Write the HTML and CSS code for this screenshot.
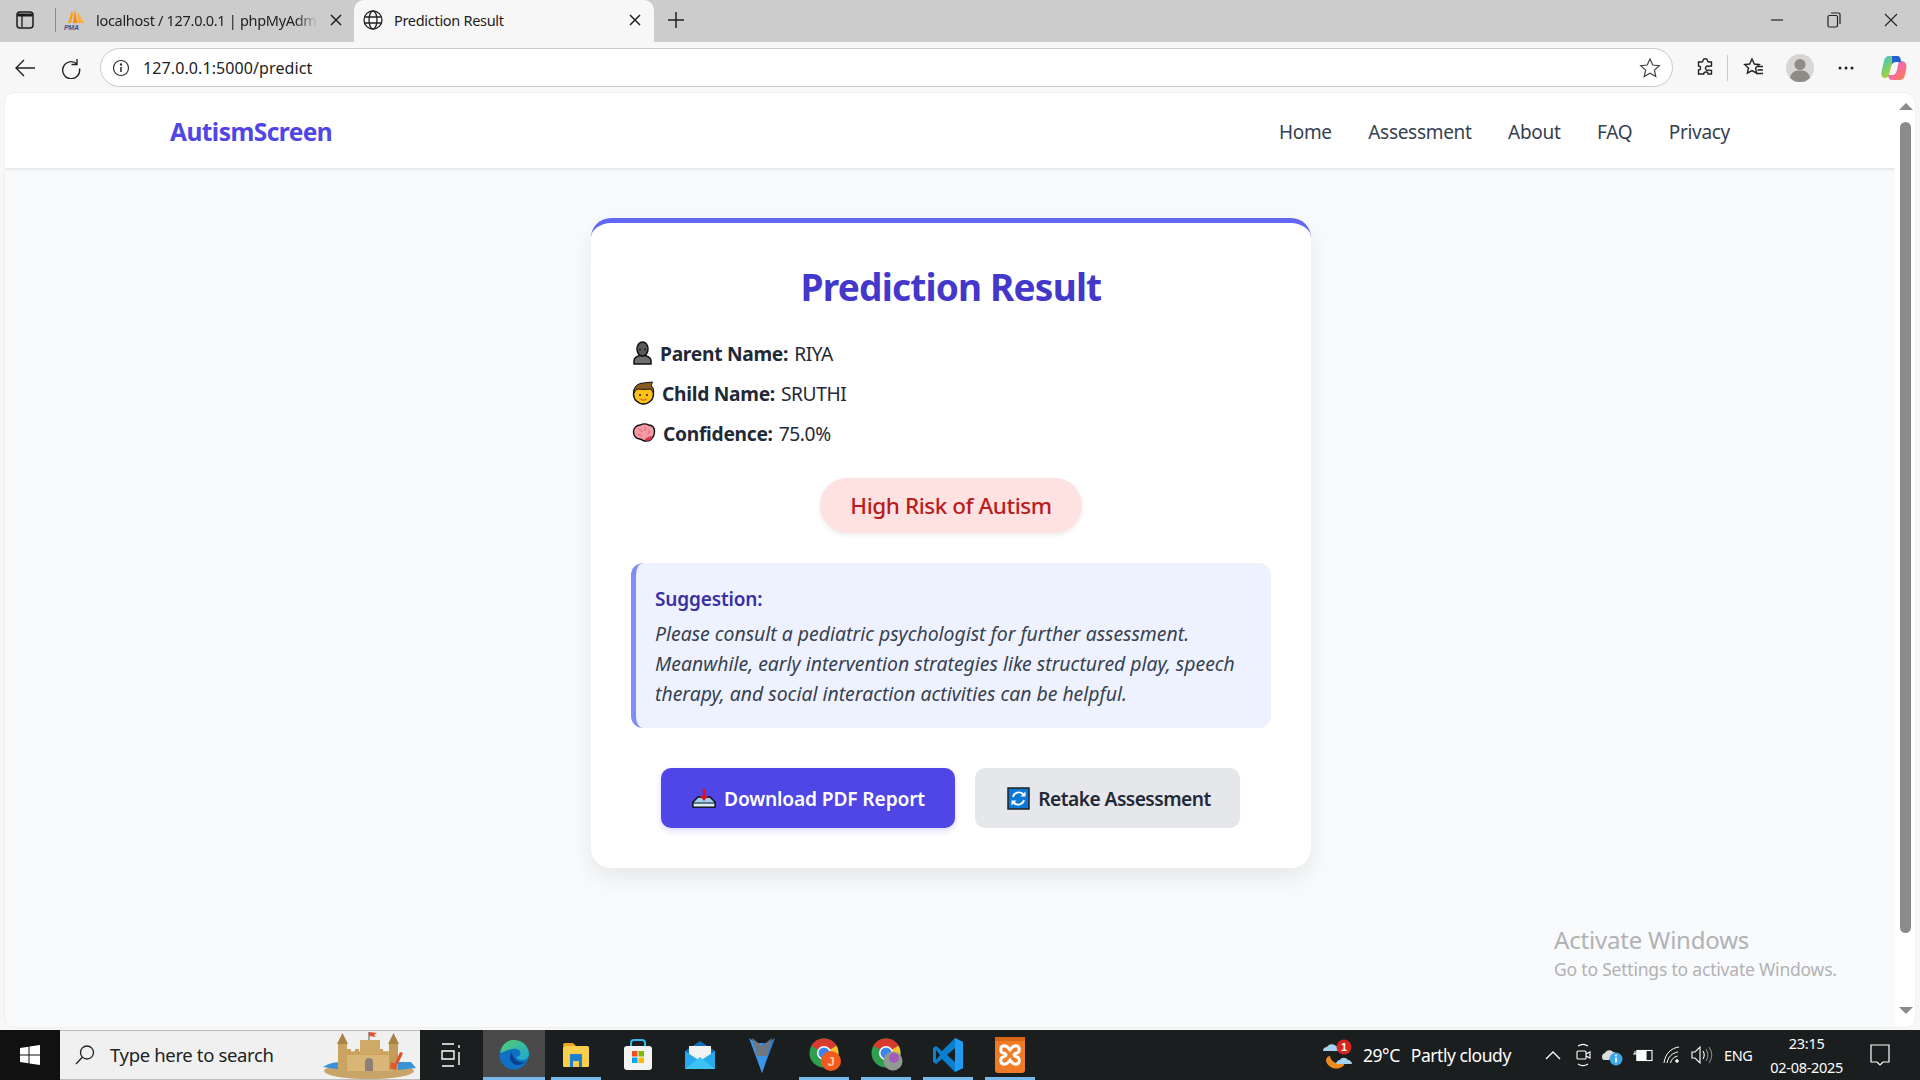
FILE: index.html
```html
<!DOCTYPE html>
<html lang="en">
<head>
<meta charset="utf-8">
<title>Prediction Result</title>
<link rel="stylesheet" href="styles.css">
</head>
<body>
<div class="screen">
  <div class="tabstrip">
    <div class="sidebtn">
      <svg width="20" height="20" viewBox="0 0 20 20"><rect x="2" y="2" width="16" height="16" rx="3" fill="none" stroke="#1a1a1a" stroke-width="1.5"/><path d="M2.5 3.5h15v3h-15z" fill="#1a1a1a"/><path d="M7 6v11" stroke="#1a1a1a" stroke-width="1.3"/></svg>
    </div>
    <div class="tabsep"></div>
    <div class="tab inactive">
      <svg class="favicon" width="22" height="22" viewBox="0 0 22 22"><path d="M8 1 L4 14 H7 L9 6z" fill="#f7a11a"/><path d="M11 0 L9 14 H13z" fill="#f58a0b"/><path d="M14 3 L13 14 H20z" fill="#fbb040"/><text x="0" y="21" class="pma">PMA</text></svg>
      <span class="tabtitle fade">localhost / 127.0.0.1 | phpMyAdmin</span>
      <svg class="tabx" width="12" height="12" viewBox="0 0 12 12"><path d="M1 1l10 10M11 1L1 11" stroke="#222" stroke-width="1.5"/></svg>
    </div>
    <div class="tab active">
      <svg class="favicon" width="20" height="20" viewBox="0 0 20 20" fill="none" stroke="#222" stroke-width="1.3"><circle cx="10" cy="10" r="9"/><ellipse cx="10" cy="10" rx="4" ry="9"/><path d="M1.5 7h17M1.5 13h17"/></svg>
      <span class="tabtitle">Prediction Result</span>
      <svg class="tabx" width="12" height="12" viewBox="0 0 12 12"><path d="M1 1l10 10M11 1L1 11" stroke="#222" stroke-width="1.5"/></svg>
    </div>
    <div class="newtab">
      <svg width="18" height="18" viewBox="0 0 18 18"><path d="M9 1v16M1 9h16" stroke="#222" stroke-width="1.5"/></svg>
    </div>
    <div class="winbtns">
      <svg width="14" height="14" viewBox="0 0 14 14"><path d="M1 7h12" stroke="#222" stroke-width="1.2"/></svg>
      <svg width="14" height="16" viewBox="0 0 14 16" fill="none" stroke="#222" stroke-width="1.2"><rect x="1" y="3.5" width="9.5" height="11.5" rx="1.5"/><path d="M4 1h7.5a1.5 1.5 0 0 1 1.5 1.5V12"/></svg>
      <svg width="14" height="14" viewBox="0 0 14 14"><path d="M1 1l12 12M13 1L1 13" stroke="#222" stroke-width="1.1"/></svg>
    </div>
  </div>

  <div class="toolbar">
    <svg class="navicon" width="22" height="20" viewBox="0 0 22 20" fill="none" stroke="#222" stroke-width="1.4"><path d="M21 10H2M10 2l-8 8 8 8"/></svg>
    <svg class="navicon refresh" width="22" height="22" viewBox="0 0 22 22" fill="none" stroke="#222" stroke-width="1.4"><path d="M17 2v5.500h-5.500M17 7A8.500 8.500 0 1 0 19.500 11.500"/></svg>
    <div class="addressbar">
      <svg width="18" height="18" viewBox="0 0 18 18" fill="none" stroke="#333" stroke-width="1.2"><circle cx="9" cy="9" r="7.500"/><path d="M9 8v5" stroke-width="1.600"/><circle cx="9" cy="5.500" r="0.600" fill="#333"/></svg>
      <span class="url">127.0.0.1:5000/predict</span>
      <svg class="addr-star" width="22" height="22" viewBox="0 0 22 22" fill="none" stroke="#444" stroke-width="1.2"><path d="M11 2l2.800 6 6.500.7-4.900 4.400 1.400 6.500L11 16.300 5.200 19.600l1.400-6.500L1.700 8.700 8.200 8z"/></svg>
    </div>
    <div class="toolicons">
      <svg class="ti-ext" width="20" height="22" viewBox="0 0 20 22" fill="none" stroke="#222" stroke-width="1.400"><path d="M8 3.500a2.300 2.300 0 0 1 4.500 0c0 1 .3 1.500 1.300 1.500h2.700v4c-1 0-2-.3-2.500.5a2.200 2.200 0 1 0 0 3.500c.8.500 1.500.5 2.500.5v3.500h-3.500c0-1.200-.5-2-2-2s-2.300.8-2.300 2H3.500v-4c1.300 0 2-.6 2-2s-.7-2-2-2V5h3c1 0 1.500-.5 1.500-1.500z"/></svg>
      <div class="toolsep"></div>
      <svg class="ti-fav" width="22" height="22" viewBox="0 0 22 22" fill="none" stroke="#222" stroke-width="1.400"><path d="M9 2l2.300 5 5 .6-3.700 3.500 1 5L9 13.600 4.400 16.100l1-5L1.700 7.600l5-.6z"/><path d="M15 9.500h5M14.500 13h5.500M13 16.500h7"/></svg>
      <svg class="avatar" width="28" height="28" viewBox="0 0 28 28"><circle cx="14" cy="14" r="14" fill="#d8d6d3"/><circle cx="14" cy="10.500" r="5.500" fill="#8f8b86"/><path d="M4 24c1-6 5-7.500 10-7.500s9 1.500 10 7.500a14 14 0 0 1-20 0z" fill="#8f8b86"/></svg>
      <svg class="ti-more" width="18" height="6" viewBox="0 0 18 6" fill="#222"><circle cx="3" cy="3" r="1.500"/><circle cx="9" cy="3" r="1.500"/><circle cx="15" cy="3" r="1.500"/></svg>
      <svg width="28" height="28" viewBox="0 0 28 28">
        <defs>
          <linearGradient id="cpA" x1="0" y1="0" x2="1" y2="1"><stop offset="0" stop-color="#35c1f1"/><stop offset=".5" stop-color="#8bd34a"/><stop offset="1" stop-color="#f9c623"/></linearGradient>
          <linearGradient id="cpB" x1="0" y1="0" x2="1" y2="1"><stop offset="0" stop-color="#b05ae8"/><stop offset=".5" stop-color="#f56ea0"/><stop offset="1" stop-color="#fb7a3c"/></linearGradient>
        </defs>
        <path d="M9 2h8c2 0 3 1 3.500 3L21 8h-5c-3 0-4 1.500-5 5l-2 8c-.5 2-2 3-4 3-3 0-4-3-3.500-6L4 7c.5-3 2.500-5 5-5z" fill="url(#cpA)"/>
        <path d="M19 26h-7c-2 0-3-1-3.500-3l-.5-2h4c3 0 4-2 5-5l1.500-7c.3-1.500 1.500-2 3-2 3.500 0 5 3 5 6l-1.500 8c-.5 3-3 5-6 5z" fill="url(#cpB)"/>
        <path d="M12 2h5c2 0 3 1 3.500 3L21 8h-5c-2.200 0-3.400.8-4.200 2.500C12.500 7 12 4 12 2z" fill="#1f5fd6"/>
      </svg>
    </div>
  </div>

  <div class="viewport">
    <div class="page">
      <nav class="navbar">
        <a class="logo">AutismScreen</a>
        <div class="navlinks">
          <a>Home</a><a>Assessment</a><a>About</a><a>FAQ</a><a>Privacy</a>
        </div>
      </nav>
      <main class="main">
        <section class="card">
          <h1 class="title">Prediction Result</h1>
          <p class="info">
            <svg class="emoji" width="23" height="24" viewBox="0 0 23 24"><path d="M3 23v-3c0-3 2.500-4.500 5.500-5.500h6c3 1 5.500 2.500 5.500 5.500v3z" fill="#707070" stroke="#111" stroke-width="1.500"/><ellipse cx="11.500" cy="8" rx="5.500" ry="7" fill="#5a5a5a" stroke="#111" stroke-width="1.500"/><circle cx="9" cy="8.500" r=".9" fill="#111"/><circle cx="14" cy="8.500" r=".9" fill="#111"/></svg>
            <strong>Parent Name:</strong> <span>RIYA</span>
          </p>
          <p class="info">
            <svg class="emoji" width="25" height="24" viewBox="0 0 25 24"><circle cx="12.500" cy="13" r="10" fill="#fcc21b" stroke="#111" stroke-width="1.400"/><path d="M3 12C2 6 7 2 12.500 2c3 0 6-1 9-1-1 2-1 3-1 4 2 2 2.500 4 2 7-1-2-2-3-3.500-4-3.500.5-8.500.5-11.500 0C5 8.500 4 10 3 12z" fill="#8a5a24" stroke="#111" stroke-width="1"/><circle cx="9" cy="14" r="1" fill="#222"/><circle cx="16" cy="14" r="1" fill="#222"/><path d="M9.500 18c2 1.500 4 1.500 6 0" stroke="#d96a1a" stroke-width="1.200" fill="none"/></svg>
            <strong>Child Name:</strong> <span>SRUTHI</span>
          </p>
          <p class="info">
            <svg class="emoji" width="26" height="20" viewBox="0 0 26 20"><path d="M2.500 9c0-4 3-7 7-7 2-1.500 6-1.500 8 0 4 0 6 3 6 7s-1 5-3 7c-1 1.500-3 2-5 2-2 0-4 0-5-1.500-4-.500-8-2.500-8-7.500z" fill="#f49aa8" stroke="#111" stroke-width="1.400"/><path d="M15.500 18c2 0 5-1 6-3l-2-2-6 3z" fill="#d8334a"/><path d="M7.500 6c2 0 3 1 3 3M13.500 4c1 1 1 3 0 4M17.500 7c1 1 1 3-1 4M6.500 12c2-1 4 0 4 2" stroke="#d66" fill="none"/></svg>
            <strong>Confidence:</strong> <span>75.0%</span>
          </p>
          <div class="pillrow"><span class="pill">High Risk of Autism</span></div>
          <div class="suggestion">
            <h2 class="sugg-title">Suggestion:</h2>
            <p class="sugg-text">Please consult a pediatric psychologist for further assessment. Meanwhile, early intervention strategies like structured play, speech therapy, and social interaction activities can be helpful.</p>
          </div>
          <div class="actions">
            <a class="btn primary">
              <svg class="btnicon" width="24" height="20" viewBox="0 0 24 20"><path d="M1 19v-5l5-5h12l5 5v5z" fill="#9fd0ef" stroke="#111" stroke-width="1.500" stroke-linejoin="round"/><path d="M1 15h22v4H1z" fill="#d7ecf9" stroke="#111" stroke-width="1.200"/><path d="M12 1v10" stroke="#e0101c" stroke-width="2.400"/><path d="M8 8h8l-4 5z" fill="#e0101c"/></svg>
              Download PDF Report
            </a>
            <a class="btn secondary">
              <svg class="btnicon" width="23" height="23" viewBox="0 0 23 23"><rect x="1" y="1" width="21" height="21" fill="#0a78d4" stroke="#222" stroke-width="1.500"/><path d="M6 10a6 6 0 0 1 10-3l1.500 1.500M17 13a6 6 0 0 1-10 3l-1.500-1.500" stroke="#fff" stroke-width="1.800" fill="none"/><path d="M18.500 4.500v5h-5zM4.500 18.500v-5h5z" fill="#fff"/></svg>
              Retake Assessment
            </a>
          </div>
        </section>
      </main>
      <div class="watermark">
        <div class="wm-title">Activate Windows</div>
        <div class="wm-sub">Go to Settings to activate Windows.</div>
      </div>
    </div>
    <div class="scrollbar">
      <div class="arrow up"></div>
      <div class="thumb"></div>
      <div class="arrow down"></div>
    </div>
  </div>

  <div class="taskbar">
    <div class="startbtn">
      <svg width="20" height="20" viewBox="0 0 20 20" fill="#fff"><path d="M0 3l8.500-1.200V9.500H0zM9.500 1.600L20 0v9.500H9.500zM0 10.500h8.500v7.700L0 17zM9.500 10.500H20V20L9.500 18.400z"/></svg>
    </div>
    <div class="searchbox">
      <svg width="22" height="22" viewBox="0 0 22 22" fill="none" stroke="#222" stroke-width="1.300"><circle cx="13" cy="8.500" r="6.500"/><path d="M8.500 13L2 20"/></svg>
      <span class="searchtext">Type here to search</span>
      <svg class="castle" width="94" height="50" viewBox="0 0 94 50">
        <ellipse cx="46" cy="41" rx="45" ry="8" fill="#c9a468"/>
        <path d="M0 37c6-4 12-5 20-5v8z" fill="#3a93d6"/>
        <path d="M73 32h15l5 6-18 2z" fill="#3a93d6"/>
        <rect x="24" y="21" width="46" height="20" fill="#d9b676"/>
        <path d="M24 19h4v3h4v-3h4v3h4v-3h4v3h4v-3h4v3h4v-3h4v3h5v3H24z" fill="#c9a05c"/>
        <rect x="37" y="10" width="20" height="14" fill="#cfa968"/>
        <path d="M46 10V2" stroke="#555" stroke-width="1"/>
        <path d="M46 2l8 1-3 2 2 2-7-1z" fill="#e2502a"/>
        <rect x="15" y="14" width="9" height="26" fill="#cba461"/><path d="M14 14l5.500-11L25 14z" fill="#a98449"/>
        <rect x="66" y="14" width="9" height="26" fill="#c49c58"/><path d="M65 14l5.500-11L76 14z" fill="#a98449"/>
        <path d="M42 41V32a4 4 0 0 1 8 0v9z" fill="#8a8079"/>
        <path d="M77 22l3 1-5 11-3-1z" fill="#e0502a"/>
        <path d="M68 32l6 2-1 6-6-2z" fill="#e8562d"/>
      </svg>
    </div>
    <div class="taskcell taskview">
      <svg width="20" height="24" viewBox="0 0 20 24" fill="none" stroke="#fff" stroke-width="1.400"><path d="M1 1h12M1 23h12M1 8h12v8H1zM18 2v3M18 9v13"/></svg>
    </div>
    <div class="taskcell current running">
      <svg width="30" height="32" viewBox="0 0 30 32">
        <defs><linearGradient id="edgeA" x1="0" y1="0" x2="1" y2="1"><stop offset="0" stop-color="#55d16a"/><stop offset="1" stop-color="#1aa5d8"/></linearGradient></defs>
        <circle cx="15" cy="16" r="14.500" fill="#0f71c4"/>
        <path d="M1 14C3 5 9 1 15 1c8 0 15 6 15 14 0 4-3 6-6.500 6-3 0-6-1-6-3 3-.5 4-2 4-4 0-3-4-5-8-4-5 1-8 3-12.500 4z" fill="url(#edgeA)"/>
        <path d="M13 13c-3 3-3 9 2 12 3 2 8 1 11-2-3 1-8 0-10-3-2-2-3-5-3-7z" fill="#0b3f8f"/>
      </svg>
    </div>
    <div class="taskcell running partial">
      <svg width="28" height="26" viewBox="0 0 28 26"><path d="M1 3a2 2 0 0 1 2-2h8l3 3H1z" fill="#e8a71c"/><rect x="1" y="4" width="26" height="21" rx="1.500" fill="#f8cf4a"/><path d="M8 12h12v13h-3v-6h-6v6H8z" fill="#1d7fd1"/></svg>
    </div>
    <div class="taskcell">
      <svg width="30" height="32" viewBox="0 0 30 32"><path d="M8 7V4a3 3 0 0 1 3-3h8a3 3 0 0 1 3 3v3" fill="none" stroke="#38b6ef" stroke-width="2"/><rect x="1" y="7" width="28" height="24" rx="3" fill="#f4f4f4"/><rect x="9" y="12" width="5.500" height="5.500" fill="#f25022"/><rect x="15.500" y="12" width="5.500" height="5.500" fill="#7fba00"/><rect x="9" y="18.500" width="5.500" height="5.500" fill="#00a4ef"/><rect x="15.500" y="18.500" width="5.500" height="5.500" fill="#ffb900"/></svg>
    </div>
    <div class="taskcell">
      <svg width="30" height="28" viewBox="0 0 30 28"><path d="M0 10L15 0l15 10v18H0z" fill="#0f6cbd"/><path d="M4 5h22v11L15 22 4 16z" fill="#f3f3f3"/><path d="M0 10l15 10 15-10v18H0z" fill="#27a9ec"/><path d="M0 28l15-12 15 12z" fill="#3cc2f5"/></svg>
    </div>
    <div class="taskcell">
      <svg width="26" height="36" viewBox="0 0 26 36"><path d="M0 1l7 5h6L13 36z" fill="#3c96e8"/><path d="M26 1l-7 5h-6L13 36z" fill="#2e7fd0"/><path d="M3 1l10 8 10-8-5 18h-10z" fill="#6f7780"/><path d="M8 19h10l-5 17z" fill="#3c96e8"/></svg>
    </div>
    <div class="taskcell running">
      <svg class="chromeic" width="32" height="34" viewBox="0 0 32 34">
        <circle cx="15" cy="15" r="14.500" fill="#2f9f4f"/>
        <path d="M15 15L2.400 7.800A14.500 14.500 0 0 1 27.600 7.800z" fill="#d93a30"/>
        <path d="M15 15L27.600 7.800A14.500 14.500 0 0 1 15 29.500z" fill="#f7c52b"/>
        <circle cx="15" cy="15" r="7" fill="#fff"/><circle cx="15" cy="15" r="5.500" fill="#3d84ef"/>
        <circle cx="22" cy="23" r="10" fill="#f25a1e"/>
        <text x="22" y="28" class="badge-j">J</text>
      </svg>
    </div>
    <div class="taskcell running">
      <svg class="chromeic" width="32" height="34" viewBox="0 0 32 34">
        <circle cx="15" cy="15" r="14.500" fill="#2f9f4f"/>
        <path d="M15 15L2.400 7.800A14.500 14.500 0 0 1 27.600 7.800z" fill="#d93a30"/>
        <path d="M15 15L27.600 7.800A14.500 14.500 0 0 1 15 29.500z" fill="#f7c52b"/>
        <circle cx="15" cy="15" r="7" fill="#fff"/><circle cx="15" cy="15" r="5.500" fill="#3d84ef"/>
        <circle cx="22" cy="23" r="9.500" fill="#8f9a92"/>
        <circle cx="23" cy="20" r="5" fill="#a55bb8"/>
      </svg>
    </div>
    <div class="taskcell running">
      <svg width="32" height="36" viewBox="0 0 32 36"><path d="M23 1l8 4v26l-8 4-13-13-6 5-3-2v-14l3-2 6 5z" fill="#0a7fcf"/><path d="M23 1l8 4v26l-8 4z" fill="#1f9cf0"/><path d="M23 11l-8 7 8 7z" fill="#1b1e1f"/><path d="M4 13l4 5-4 5z" fill="#1b1e1f"/></svg>
    </div>
    <div class="taskcell running">
      <svg width="30" height="36" viewBox="0 0 30 36"><rect x="0" y="0" width="30" height="36" rx="3" fill="#f17a24"/><rect x="0" y="0" width="30" height="4" fill="#d76517"/><path d="M8 9c3-1 5 1 7 4 2-3 4-5 7-4 3 1 3 6 0 7-2 .500-3 1-3 2s1 1.500 3 2c3 1 3 6 0 7-3 1-5-1-7-4-2 3-4 5-7 4-3-1-3-6 0-7 2-.500 3-1 3-2s-1-1.500-3-2c-3-1-3-6 0-7z" fill="none" stroke="#fff" stroke-width="3"/></svg>
    </div>
    <div class="tray">
      <svg class="weather" width="32" height="32" viewBox="0 0 32 32">
        <path d="M4 22c2 6 8 9 14 7 3-1 4-3 5-5-8 2-14-1-15-7-3 0-4 3-4 5z" fill="#f08a1d"/>
        <path d="M1 12c0-3 2-4 4-4 1-3 6-4 9-1 3 0 4 2 4 5H1z" fill="#a5d2f0"/>
        <path d="M14 25c0-2 2-4 4-4 1-3 6-3 8 0 2 0 4 2 4 4z" fill="#a5d2f0"/>
        <circle cx="22" cy="8" r="7.500" fill="#d8231f"/>
        <text x="22" y="12" class="badge-1">1</text>
      </svg>
      <span class="weathertext">29°C</span>
      <span class="weathertext cloudy">Partly cloudy</span>
      <svg class="tray-chev" width="16" height="10" viewBox="0 0 16 10" fill="none" stroke="#fff" stroke-width="1.300"><path d="M1 9l7-7 7 7"/></svg>
      <svg class="tray-ic" width="16" height="24" viewBox="0 0 16 24" fill="none" stroke="#fff" stroke-width="1.100"><path d="M3 3c3-2 7-2 10 0M3 21c3 2 7 2 10 0"/><rect x="2" y="8" width="9" height="8" rx="1"/><path d="M11 11l4-2v6l-4-2"/></svg>
      <svg class="tray-ic" width="22" height="22" viewBox="0 0 22 22"><path d="M1 13c0-3 2-4 3-4 1-3 6-4 8-1 2 0 3 1 3 3L8 16H3c-1 0-2-1-2-3z" fill="#dcdcdc"/><circle cx="15" cy="15" r="6.500" fill="#3da7e6"/><path d="M15 13.500v5" stroke="#fff" stroke-width="1.600"/><circle cx="15" cy="11.500" r="1" fill="#fff"/></svg>
      <svg class="tray-ic" width="20" height="14" viewBox="0 0 20 14" fill="none" stroke="#fff" stroke-width="1.100"><rect x="4" y="2.500" width="15" height="10"/><rect x="4" y="3" width="9" height="9" fill="#fff"/><path d="M0 6h5M2 3v3"/></svg>
      <svg class="tray-ic" width="18" height="18" viewBox="0 0 18 18" fill="none" stroke="#fff" stroke-width="1"><path d="M1 17C2 8 8 2 16 1M4 17c1-6 5-10 11-11M7.500 17c.5-3 3-6 7-7"/><circle cx="14" cy="15" r="1.300" fill="#fff"/></svg>
      <svg class="tray-ic" width="22" height="20" viewBox="0 0 22 20" fill="none" stroke="#fff" stroke-width="1.100"><path d="M1 7h3l5-5v16l-5-5H1z"/><path d="M12 6c1.500 2.500 1.500 5.500 0 8" /><path d="M15 4c2.500 3.500 2.500 8.500 0 12M18 2c3.500 5 3.500 11 0 16" stroke="#888"/></svg>
      <span class="lang">ENG</span>
      <div class="clock"><span>23:15</span><span>02-08-2025</span></div>
      <svg class="notify" width="20" height="23" viewBox="0 0 20 23" fill="none" stroke="#fff" stroke-width="1.200"><path d="M1 1h18v17h-6l-3 3-3-3H1z"/></svg>
    </div>
  </div>
</div>
</body>
</html>
```

FILE: styles.css
```css
* { box-sizing: border-box; }
html, body { margin: 0; padding: 0; height: 100%; }
body { font-family: "Noto Sans", "Open Sans", sans-serif; overflow: hidden; color: #222; }
.screen { width: 1920px; height: 1080px; display: flex; flex-direction: column; background: #f7f7f7; }

.tabstrip { height: 42px; background: #cccccc; display: flex; align-items: flex-end; flex: none; }
.sidebtn { width: 55px; height: 42px; display: flex; align-items: center; justify-content: flex-start; padding: 0 0 2px 15px; }
.tabsep { width: 1px; height: 24px; background: #8a8a8a; margin-bottom: 10px; }
.tab { height: 42px; display: flex; align-items: center; font-size: 14.500px; letter-spacing: -.3px; }
.tab.inactive { width: 298px; padding: 0 12px 3px 8px; }
.tab.active { width: 300px; background: #f7f7f7; border-radius: 10px 10px 0 0; padding: 0 13px 3px 9px; }
.favicon { flex: none; margin-right: 11px; }
.tab.inactive .favicon { margin-right: 10px; }
.tabtitle { flex: 1; overflow: hidden; white-space: nowrap; color: #222; }
.tabtitle.fade { -webkit-mask-image: linear-gradient(90deg, #000 90%, transparent); mask-image: linear-gradient(90deg, #000 90%, transparent); margin-right: 12px; }
.tabx { flex: none; }
.newtab { width: 44px; height: 42px; display: flex; align-items: center; justify-content: center; padding-bottom: 2px; }
.winbtns { margin-left: auto; height: 42px; display: flex; align-items: center; justify-content: flex-end; gap: 43px; padding: 0 22px 2px 0; }
.pma { font: italic 700 7px "Liberation Sans", sans-serif; fill: #4a4f8c; }

.toolbar { height: 51px; display: flex; align-items: center; flex: none; background: #f7f7f7; }
.navicon { flex: none; margin-left: 14px; }
.navicon.refresh { margin-left: 24px; margin-right: 18px; }
.addressbar { flex: none; width: 1573px; height: 39px; background: #fff; border: 1px solid #c9c9c9; border-radius: 20px; display: flex; align-items: center; padding: 0 11px 0 11px; }
.url { margin-left: 13px; font-size: 16px; letter-spacing: .1px; color: #222; }
.addr-star { margin-left: auto; }
.toolicons { flex: none; width: 247px; display: flex; align-items: center; padding-left: 22px; }
.ti-ext { margin-right: 12px; }
.toolsep { width: 1px; height: 26px; background: #c9c9c9; margin-right: 15px; }
.ti-fav { margin-right: 21px; }
.toolicons .avatar { margin-right: 23px; }
.ti-more { margin-right: 25px; }

.viewport { flex: 1; min-height: 0; margin: 0 5px 3px 5px; display: flex; background: #fff; border-radius: 8px 10px 8px 8px; box-shadow: 0 0 1px #bbb; overflow: hidden; }
.page { flex: 1; min-width: 0; background: #f9fafb; display: flex; flex-direction: column; position: relative; border-radius: 8px 0 0 8px; }
.navbar { height: 75px; flex: none; background: #fff; box-shadow: 0 1px 3px rgba(0,0,0,.12); display: flex; align-items: center; justify-content: space-between; padding: 2px 165px 0 165px; }
.logo { font-size: 24.500px; font-weight: 700; color: #4f46e5; letter-spacing: -.55px; }
.navlinks { display: flex; gap: 36.500px; font-size: 19px; letter-spacing: -.3px; color: #374151; }

.main { flex: 1; display: flex; justify-content: center; align-items: flex-start; padding: 50px 0 0 2px; }
.card { width: 720px; height: 650px; background: #fff; border-top: 5px solid #6366f1; border-radius: 20px; box-shadow: 0 10px 25px rgba(0,0,0,.08); padding: 39px 40px 0; color: #1f2937; }
.title { margin: 0 0 28px; text-align: center; font-size: 37px; line-height: 50px; font-weight: 700; color: #4338ca; letter-spacing: -.8px; }
.info { margin: 0 0 14px; height: 26px; display: flex; align-items: center; gap: 5px; font-size: 19.200px; letter-spacing: -.4px; }
.info strong { font-weight: 700; margin-left: 1px; margin-right: 1px; letter-spacing: -.28px; color: #1f2937; }
.emoji { flex: none; }
.pillrow { display: flex; justify-content: center; margin-top: 32px; }
.pill { display: flex; align-items: center; height: 55px; width: 262px; justify-content: center; border-radius: 28px; background: #fee2e2; color: #b91c1c; font-size: 22.500px; font-weight: 500; letter-spacing: -.45px; box-shadow: 0 2px 5px rgba(0,0,0,.08); }
.suggestion { margin-top: 30px; height: 165px; background: #eef2ff; border-left: 5px solid #818cf8; border-radius: 12px; padding: 22px 19px 0; }
.sugg-title { margin: 0 0 6px; font-size: 19px; font-weight: 600; line-height: 28px; color: #3730a3; letter-spacing: -.15px; }
.sugg-text { margin: 0; font-size: 19.400px; font-style: italic; line-height: 30px; color: #374151; letter-spacing: 0; }
.actions { display: flex; justify-content: center; gap: 20px; margin-top: 40px; padding-right: 2px; }
.btn { height: 60px; display: flex; align-items: center; justify-content: center; border-radius: 10px; font-size: 19.200px; font-weight: 600; }
.btn.primary { width: 294px; padding-left: 2px; background: #4f46e5; color: #fff; box-shadow: 0 3px 6px rgba(79,70,229,.2); letter-spacing: -.15px; }
.btn.secondary { width: 265px; padding-left: 4px; background: #e5e7eb; color: #1f2937; letter-spacing: -.55px; }
.btnicon { margin-right: 8px; flex: none; }

.watermark { position: absolute; left: 1549px; top: 832px; color: #b0b2b5; }
.wm-title { font-size: 24px; letter-spacing: -.2px; line-height: 30px; }
.wm-sub { font-size: 17.500px; letter-spacing: -.2px; line-height: 28px; }

.scrollbar { width: 20px; flex: none; background: #fff; position: relative; display: flex; flex-direction: column; align-items: flex-start; }
.thumb { width: 11px; height: 811px; margin: 12px 0 0 5px; border-radius: 6px; background: #8b8b8b; }
.arrow { width: 0; height: 0; margin-left: 4px; border-left: 7px solid transparent; border-right: 7px solid transparent; }
.arrow.up { margin-top: 10px; border-bottom: 7px solid #8b8b8b; }
.arrow.down { margin-top: 74px; border-top: 7px solid #8b8b8b; }

.taskbar { height: 50px; flex: none; background: #1b1e1f; display: flex; align-items: center; }
.startbtn { width: 60px; height: 50px; display: flex; align-items: center; justify-content: center; background: #111; }
.searchbox { width: 360px; height: 50px; background: #f0f0f0; display: flex; align-items: center; padding-left: 14px; border-top: 1px solid #bdbdbd; border-bottom: 1px solid #bdbdbd; position: relative; }
.searchtext { margin-left: 14px; padding-bottom: 2px; font-size: 18.500px; letter-spacing: -.35px; color: #222; }
.castle { margin-left: auto; margin-right: 3px; }
.taskcell { width: 62px; height: 50px; flex: none; display: flex; align-items: center; justify-content: center; position: relative; }
.taskcell.taskview { width: 63px; padding-right: 2px; }
.taskcell.current { background: #4a4a4a; }
.taskcell.running::after { content: ""; position: absolute; left: 6px; right: 6px; bottom: 0; height: 3px; background: #76b9ed; }
.taskcell.current::after { left: 0; right: 0; }
.chromeic { margin-left: 2px; }
.tray { margin-left: auto; height: 50px; display: flex; align-items: center; color: #fff; width: 616px; padding-left: 18px; }
.weather { flex: none; margin-right: 9px; }
.weathertext { font-size: 17.500px; letter-spacing: -.45px; margin-right: 11px; white-space: nowrap; }
.weathertext.cloudy { margin-right: 34px; }
.tray-chev { margin-right: 14px; }
.tray-ic { margin-right: 10px; flex: none; }
.lang { font-size: 14.500px; letter-spacing: -.3px; margin-left: 1px; margin-right: 15px; }
.clock { display: flex; flex-direction: column; align-items: center; font-size: 14.500px; line-height: 24px; letter-spacing: -.3px; width: 78px; }
.notify { margin-left: 24px; }
.badge-j { font: 700 13px "Liberation Sans", sans-serif; fill: #ffc9a8; text-anchor: middle; }
.badge-1 { font: 700 11px "Liberation Sans", sans-serif; fill: #fff; text-anchor: middle; }
```
